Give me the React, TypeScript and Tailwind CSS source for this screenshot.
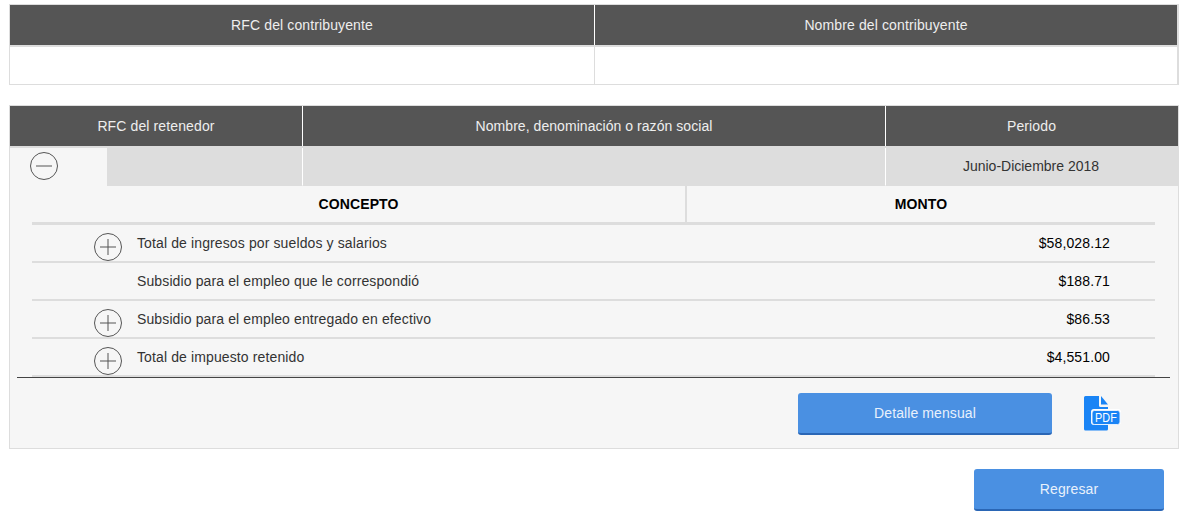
const rows = [
  { label: 'Total de ingresos por sueldos y salarios', amount: '$58,028.12', expand: true },
  { label: 'Subsidio para el empleo que le correspondió', amount: '$188.71', expand: false },
  { label: 'Subsidio para el empleo entregado en efectivo', amount: '$86.53', expand: true },
  { label: 'Total de impuesto retenido', amount: '$4,551.00', expand: true },
]

function RoundIcon({ minus = false }: { minus?: boolean }) {
  return (
    <svg width="30" height="30" viewBox="0 0 30 30" fill="none" stroke="#555" strokeWidth="1">
      <circle cx="15" cy="15" r="13.5" />
      <path d="M7 15h16" />
      {!minus && <path d="M15 7v16" />}
    </svg>
  )
}

function PdfIcon() {
  return (
    <svg width="38" height="36" viewBox="0 0 38 36">
      <path d="M2.5 1H16v9.5a1.5 1.5 0 0 0 1.5 1.5H25v22a1.5 1.5 0 0 1-1.5 1.5h-21A1.5 1.5 0 0 1 1 34V2.5A1.5 1.5 0 0 1 2.5 1z" fill="#1a84f5" />
      <path d="M18 1l7 8.5h-7z" fill="#1a84f5" />
      <rect x="8" y="14" width="30" height="16" rx="3" fill="#fff" />
      <rect x="9" y="15.5" width="28" height="14" rx="2.5" fill="#1a84f5" stroke="#e3effe" strokeWidth="1" />
      <text x="23" y="27" textAnchor="middle" textLength="22" lengthAdjust="spacingAndGlyphs" fill="#fff" fontSize="13" fontFamily="Liberation Sans, sans-serif">PDF</text>
    </svg>
  )
}

function BlueButton({ children, className }: { children: string; className: string }) {
  return (
    <button className={`h-[42px] rounded-[3px] border-b-2 border-[#2a66b5] bg-[#4a90e2] tracking-[0.1px] text-[#e8f1fc] ${className}`}>
      {children}
    </button>
  )
}

export default function App() {
  return (
    <div className="min-h-[523px] bg-white px-[9px] pt-1 pr-2 font-['Liberation_Sans',Arial,sans-serif] text-sm tracking-[0.12px] text-[#333]">
      <div className="w-[1170px] border border-r-2 border-[#ddd]">
        <div className="flex h-10 bg-[#555] text-[#eee]">
          <div className="flex w-[584px] items-center justify-center">RFC del contribuyente</div>
          <div className="flex flex-1 items-center justify-center border-l border-white">Nombre del contribuyente</div>
        </div>
        <div className="flex h-[39px] border-t-2 border-[#ddd]">
          <div className="w-[585px] border-r border-[#ddd]" />
          <div className="flex-1" />
        </div>
      </div>

      <div className="mt-5 w-[1170px] border border-[#ddd] bg-[#f6f6f6]">
        <div className="flex h-10 bg-[#555] text-[#eee]">
          <div className="flex w-[292px] items-center justify-center">RFC del retenedor</div>
          <div className="flex w-[583px] items-center justify-center border-l border-white tracking-[0.05px]">Nombre, denominación o razón social</div>
          <div className="flex flex-1 items-center justify-center border-l border-white pr-px">Periodo</div>
        </div>
        <div className="flex h-10 border-t-2 border-[#ddd]">
          <div className="flex w-[97px] items-start pt-[3px] pl-[19px]">
            <RoundIcon minus />
          </div>
          <div className="w-[195px] bg-[#ddd]" />
          <div className="w-[583px] border-b border-l border-b-[#ddd] border-l-white bg-[#ddd]" />
          <div className="flex flex-1 items-center justify-center border-b border-l border-b-[#ddd] border-l-white bg-[#ddd] pr-[2px] pb-px tracking-normal text-[#333]">Junio-Diciembre 2018</div>
        </div>
        <div className="mx-[7px] w-[1153px] pb-[13px]">
          <div className="mx-[15px]">
            <div className="flex h-[39px] border-b-[3px] border-[#ddd] font-bold text-black">
              <div className="flex w-[655px] items-center justify-center border-r-2 border-[#ddd]">CONCEPTO</div>
              <div className="flex flex-1 items-center justify-center">MONTO</div>
            </div>
            {rows.map((r) => (
              <div key={r.label} className="relative flex h-[38px] items-center border-b-2 border-[#ddd] text-[#333]">
                {r.expand && (
                  <span className="absolute top-[7px] left-[61px] flex">
                    <RoundIcon />
                  </span>
                )}
                <span className="ml-[105px]">{r.label}</span>
                <span className="mr-[45px] ml-auto text-black">{r.amount}</span>
              </div>
            ))}
          </div>
          <div className="h-px bg-[#444]" />
          <div className="mt-[15px] flex items-start">
            <BlueButton className="ml-[781px] w-[254px]">Detalle mensual</BlueButton>
            <span className="mt-[2px] ml-[31px] flex">
              <PdfIcon />
            </span>
          </div>
        </div>
      </div>

      <div className="mt-5 flex w-[1155px] justify-end">
        <BlueButton className="w-[190px]">Regresar</BlueButton>
      </div>
    </div>
  )
}
